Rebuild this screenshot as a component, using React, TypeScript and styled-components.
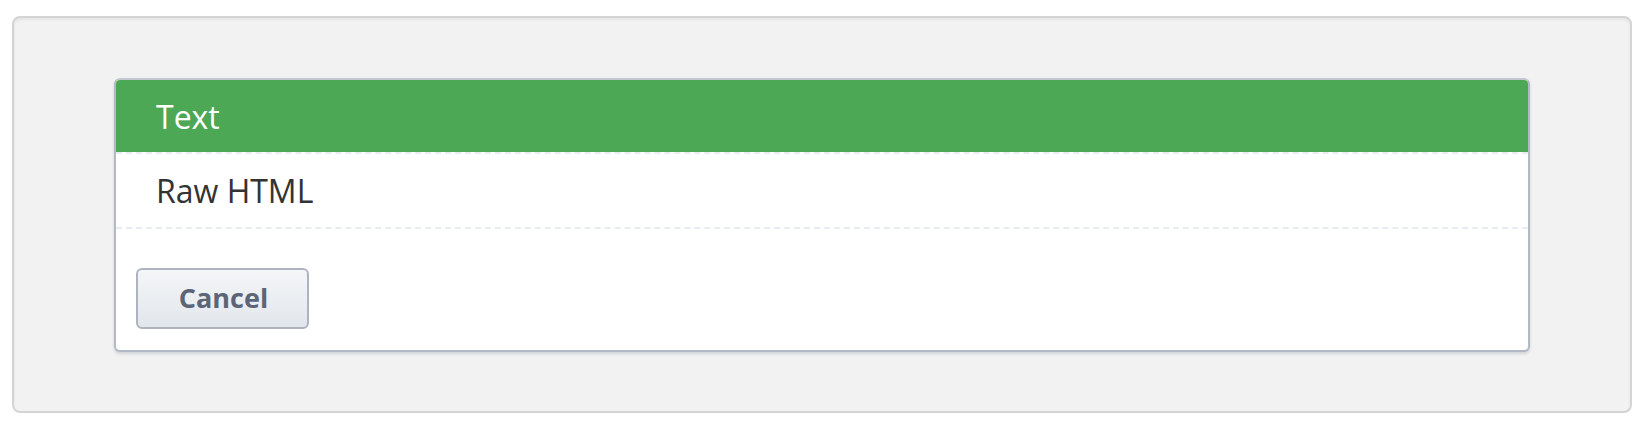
import styled, { createGlobalStyle } from "styled-components"

const GlobalStyle = createGlobalStyle`
  html, body {
    margin: 0;
    padding: 0;
    background: #ffffff;
    font-family: "Open Sans", "Noto Sans", sans-serif;
  }
`

const Panel = styled.div`
  box-sizing: border-box;
  width: 1620px;
  height: 397px;
  margin: 16px 12px 21px 12px;
  padding: 60px 100px 59px 100px;
  background: #f2f2f2;
  border: 2px solid #d4d4d4;
  border-radius: 8px;
  box-shadow: inset 0 2px 3px rgba(0, 0, 0, 0.06);
`

const Card = styled.div`
  display: flex;
  flex-direction: column;
  height: 274px;
  box-sizing: border-box;
  background: #ffffff;
  border: 2px solid #b3b9c4;
  border-top-color: #c3c8d0;
  border-radius: 6px;
  overflow: hidden;
  box-shadow: 0 2px 3px rgba(60, 70, 90, 0.18);
`

const Header = styled.div`
  display: flex;
  align-items: center;
  height: 72px;
  flex-shrink: 0;
  padding: 0 40px;
  background: #4ca855;
  color: #ffffff;
  font-size: 32px;
`

const Row = styled.div`
  display: flex;
  align-items: center;
  flex-shrink: 0;
  box-sizing: border-box;
  height: 77px;
  padding: 0 40px;
  color: #333333;
  font-size: 32px;
  border-top: 2px dashed #e8ecf1;
  border-bottom: 2px dashed #e8ecf1;
`

const Footer = styled.div`
  flex: 1;
  display: flex;
  align-items: flex-start;
  padding: 39px 20px 0;
`

const Button = styled.button`
  width: 173px;
  height: 61px;
  box-sizing: border-box;
  border: 2px solid #adb4c0;
  border-radius: 6px;
  background: linear-gradient(#f4f6f8, #e2e6eb);
  color: #5b6577;
  font-family: "Open Sans", "Noto Sans", sans-serif;
  font-weight: 700;
  font-size: 27px;
  padding: 0 0 2px 2px;
  cursor: pointer;
`

export default function App() {
  return (
    <>
      <GlobalStyle />
      <Panel>
        <Card>
          <Header>Text</Header>
          <Row>Raw HTML</Row>
          <Footer>
            <Button type="button">Cancel</Button>
          </Footer>
        </Card>
      </Panel>
    </>
  )
}
